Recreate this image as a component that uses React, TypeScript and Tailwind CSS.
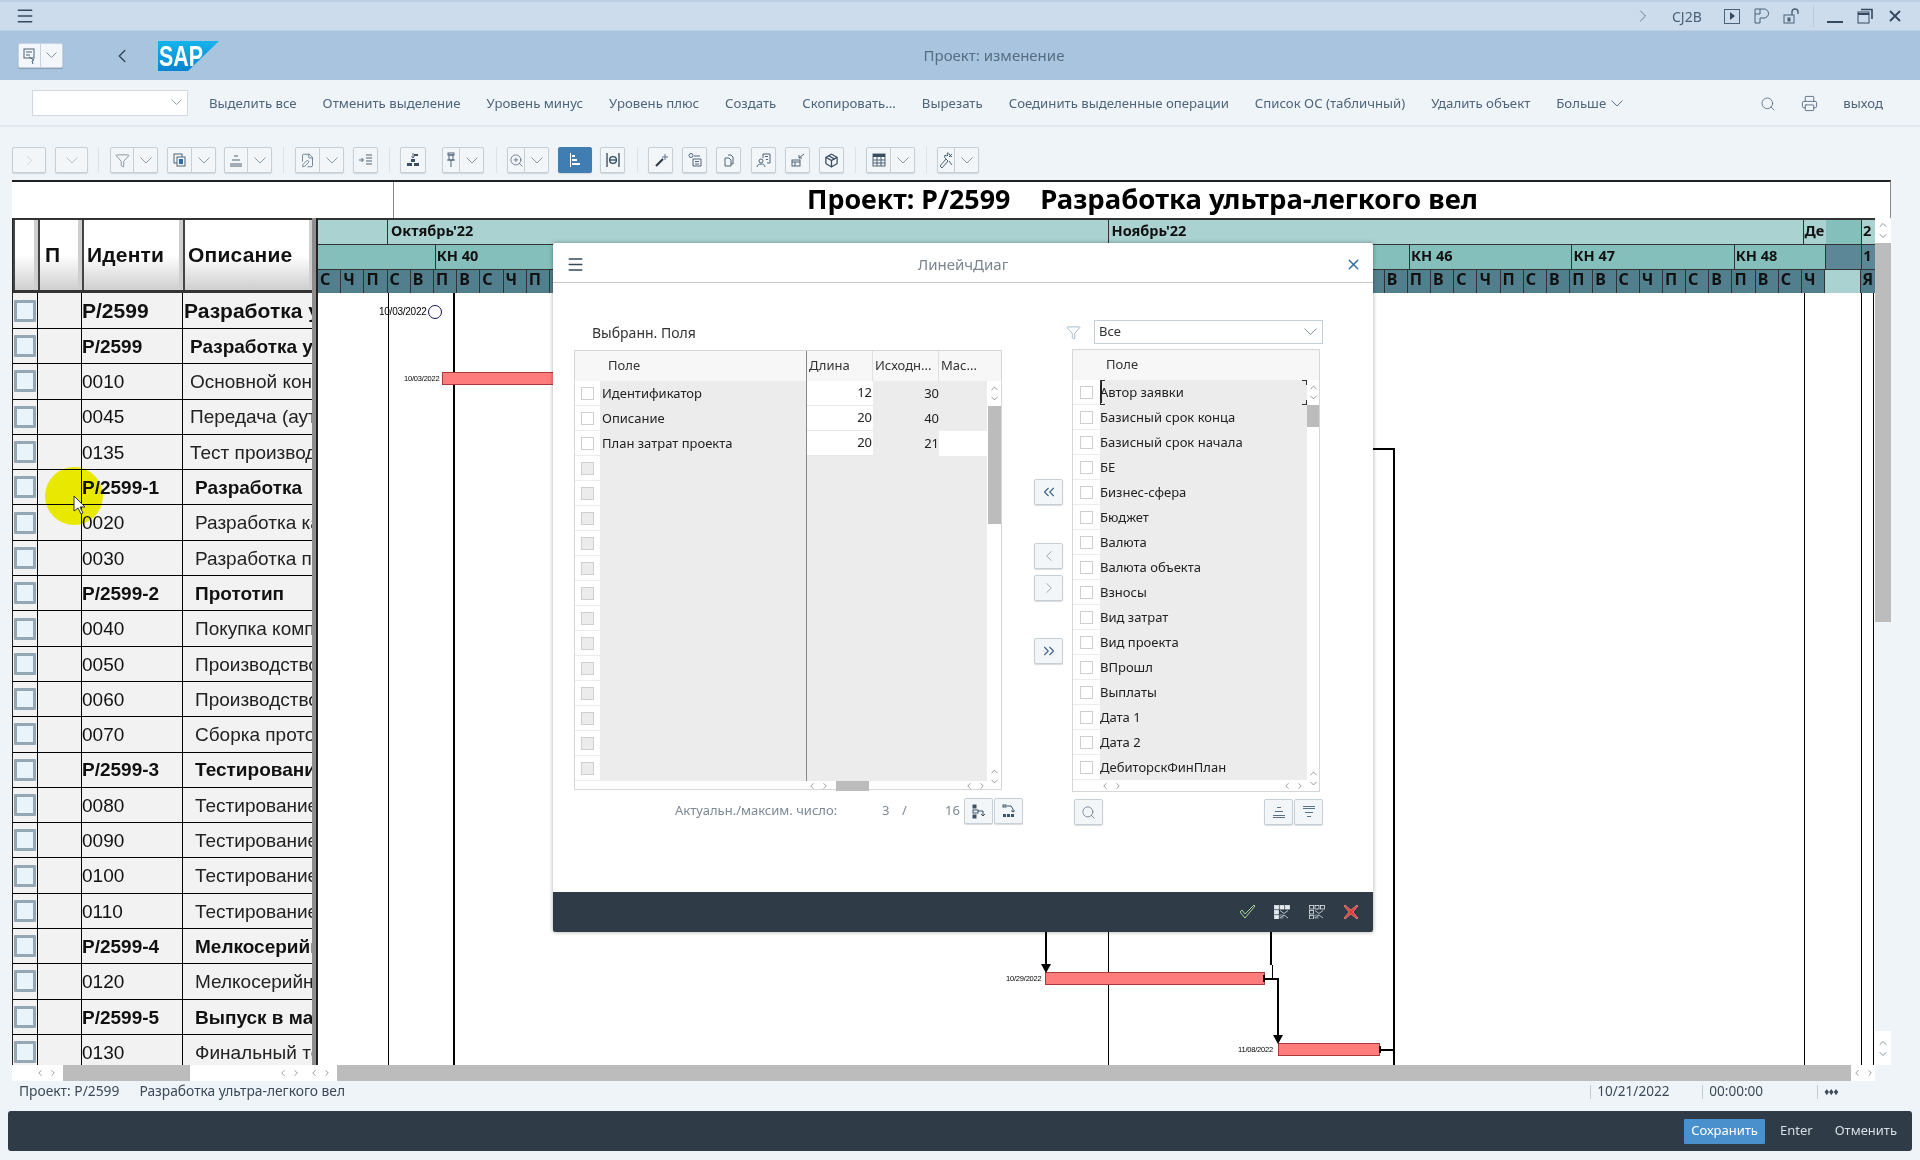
import React from "react";
import { ChevronLeft, ChevronRight, ChevronUp, ChevronDown, ChevronsLeft, ChevronsRight, Funnel, Menu, Search, Printer, X, ZoomIn, FilePen, Package } from "lucide-react";

const NS = "font-['Noto_Sans',sans-serif]";
const LS = "font-['Liberation_Sans',sans-serif]";

function Chev({ w = 12, c = "#7f8e9c" }: { w?: number; c?: string }) {
  return (
    <svg width={w} height={w * 0.55} viewBox="0 0 12 6.6" fill="none" stroke={c} strokeWidth="0.9"><path d="M0.5 0.5L6 6l5.5-5.5" /></svg>
  );
}

function Tb({ w, active, split, children }: { w: number; active?: boolean; split?: boolean; children: React.ReactNode }) {
  return (
    <div style={{ width: w }} className={`h-[26px] flex items-center shrink-0 rounded-[2px] border ${active ? "bg-[#3f7db3] border-[#3f7db3] text-white" : "bg-[#f3f6f9] border-[#c6ced6] text-[#4e6275]"} shadow-[0_1px_1px_rgba(0,0,0,0.12)]`}>
      <div className="flex-1 flex items-center justify-center">{children}</div>
      {split && (
        <div className="w-[24px] h-full flex items-center justify-center border-l border-[#c6ced6]">
          <Chev />
        </div>
      )}
    </div>
  );
}
const Sep = () => <div className="w-px h-[26px] bg-[#dbe2e8] shrink-0" />;
const Ic = ({ children, w = 16, h = 16 }: { children: React.ReactNode; w?: number; h?: number }) => (
  <svg width={w} height={h} viewBox={`0 0 ${w} ${h}`} fill="none" stroke="#4e6275" strokeWidth="1">{children}</svg>
);

function Toolbar() {
  const s = 15;
  const sw = 1.2;
  return (
    <div className="h-[26px] mt-[20px] ml-[12px] flex items-center">
      <Tb w={34}><ChevronRight size={17} strokeWidth={1.1} className="text-[#c0c8d0]" /></Tb>
      <div className="w-[9px]" />
      <Tb w={33}><Chev c="#b0bac4" /></Tb>
      <div className="w-[10px]" /><Sep /><div className="w-[11px]" />
      <Tb w={48} split><Funnel size={s} strokeWidth={1} /></Tb>
      <div className="w-[9px]" />
      <Tb w={49} split>
        <Ic><rect x="2" y="2" width="8" height="9" /><rect x="5" y="5" width="8" height="9" fill="#f3f6f9" /><rect x="7" y="7" width="4" height="5" fill="#2f6ea5" stroke="none" /></Ic>
      </Tb>
      <div className="w-[8px]" />
      <Tb w={48} split>
        <Ic><path d="M6 4h4M4 8h8M2 12h12M2 14h12" /></Ic>
      </Tb>
      <div className="w-[11px]" /><Sep /><div className="w-[11px]" />
      <Tb w={49} split><FilePen size={s} strokeWidth={sw} /></Tb>
      <div className="w-[9px]" />
      <Tb w={25}>
        <Ic><path d="M1 8h4M3.5 6l2 2-2 2M8 3h6M8 6h6M8 9h6M8 12h6" /></Ic>
      </Tb>
      <div className="w-[11px]" /><Sep /><div className="w-[10px]" />
      <Tb w={26}>
        <Ic><path d="M8 1v5M6.5 4.5L8 6l1.5-1.5" /><rect x="9" y="2" width="4" height="2" fill="#3a4d60" stroke="none" /><rect x="6" y="7" width="4" height="3" fill="#3a4d60" stroke="none" /><rect x="2" y="11" width="5" height="3" fill="#3a4d60" stroke="none" /><rect x="9" y="11" width="5" height="3" fill="#3a4d60" stroke="none" /></Ic>
      </Tb>
      <div className="w-[16px]" />
      <Tb w={42} split>
        <Ic><rect x="5" y="1" width="6" height="2" /><rect x="6" y="3" width="4" height="5" /><path d="M4 8h8M8 8v7" /></Ic>
      </Tb>
      <div className="w-[12px]" /><Sep /><div className="w-[10px]" />
      <Tb w={42} split><ZoomIn size={s} strokeWidth={sw} /></Tb>
      <div className="w-[9px]" />
      <Tb w={34} active>
        <svg width="16" height="16" viewBox="0 0 16 16"><rect x="3" y="1" width="1" height="14" fill="#fff" /><rect x="5" y="3" width="3" height="2" fill="#fff" /><rect x="5" y="7" width="5" height="2" fill="#fff" /><rect x="5" y="11" width="8" height="2" fill="#fff" /></svg>
      </Tb>
      <div className="w-[8px]" />
      <Tb w={25}>
        <svg width="16" height="16" viewBox="0 0 16 16" fill="none" stroke="#2f4a60" strokeWidth="1.3"><path d="M2 1v14M14 1v14" /><circle cx="8" cy="8" r="3.4" /><path d="M4 8h8" /></svg>
      </Tb>
      <div className="w-[12px]" /><Sep /><div className="w-[10px]" />
      <Tb w={25}>
        <Ic><path d="M3 14L10 7" strokeWidth="2.2" stroke="#2f3c48" /><path d="M12 2v6M9 5h6" strokeWidth="0.9" /></Ic>
      </Tb>
      <div className="w-[9px]" />
      <Tb w={25}>
        <Ic><circle cx="4" cy="3.5" r="2" /><path d="M7 4h6M6 7h8v7H6zM8 9.5h4M8 12h4" /></Ic>
      </Tb>
      <div className="w-[9px]" />
      <Tb w={25}>
        <Ic><path d="M7 3h3l2 2v7h-2M4 6h4l2 2v6H4z" /></Ic>
      </Tb>
      <div className="w-[10px]" />
      <Tb w={25}>
        <Ic><circle cx="5" cy="9" r="2" /><path d="M1 15c0-4 8-4 8 0M7 6V2h7v9h-3" /><path d="M9 4.5h3M10 7.5h2" /></Ic>
      </Tb>
      <div className="w-[9px]" />
      <Tb w={25}>
        <Ic><rect x="2" y="8" width="8" height="6" /><path d="M2 10h8M5 10v4M14 2L9 6M9 3v3h3" /></Ic>
      </Tb>
      <div className="w-[9px]" />
      <Tb w={25}><Package size={s} strokeWidth={2} className="text-[#3a4d60]" /></Tb>
      <div className="w-[11px]" /><Sep /><div className="w-[10px]" />
      <Tb w={49} split>
        <Ic><rect x="2" y="2" width="12" height="12" /><rect x="2" y="2" width="12" height="3" fill="#3a4d60" stroke="none" /><path d="M6 5v9M10 5v9M2 8h12M2 11h12" /></Ic>
      </Tb>
      <div className="w-[11px]" /><Sep /><div className="w-[10px]" />
      <Tb w={42} split>
        <Ic><path d="M2 14l6-7 2 2-6 7zM8 7a3 3 0 0 1-1-4l2 1 1-1-1-2a3 3 0 0 1 3 4M11 9l3 4M11 2l3 3M14 2l-3 3" /></Ic>
      </Tb>
    </div>
  );
}

const MENU = ["Выделить все", "Отменить выделение", "Уровень минус", "Уровень плюс", "Создать", "Скопировать...", "Вырезать", "Соединить выделенные операции", "Список ОС (табличный)", "Удалить объект"];

type Row = [string, string, number, number];
const ROWS: Row[] = [
  ["P/2599", "Разработка ультра-легкого", 1, 1],
  ["P/2599", "Разработка ультра-легкого", 7, 2],
  ["0010", "Основной конструктив", 7, 0],
  ["0045", "Передача (аутсорсинг)", 7, 0],
  ["0135", "Тест производства", 7, 0],
  ["P/2599-1", "Разработка", 12, 2],
  ["0020", "Разработка карбона", 12, 0],
  ["0030", "Разработка по", 12, 0],
  ["P/2599-2", "Прототип", 12, 2],
  ["0040", "Покупка компонентов", 12, 0],
  ["0050", "Производство рамы", 12, 0],
  ["0060", "Производство колес", 12, 0],
  ["0070", "Сборка прототипа", 12, 0],
  ["P/2599-3", "Тестирование", 12, 2],
  ["0080", "Тестирование рамы", 12, 0],
  ["0090", "Тестирование колес", 12, 0],
  ["0100", "Тестирование тормозов", 12, 0],
  ["0110", "Тестирование сборки", 12, 0],
  ["P/2599-4", "Мелкосерийное", 12, 2],
  ["0120", "Мелкосерийное", 12, 0],
  ["P/2599-5", "Выпуск в массы", 12, 2],
  ["0130", "Финальный тест", 12, 0],
];

function HeadCell({ w, children }: { w: number; children?: React.ReactNode }) {
  return (
    <div style={{ width: w }} className="h-full shrink-0 border-l-2 border-r-[4px] border-l-[#444] border-r-[#cfcfcf] bg-gradient-to-b from-white via-white to-[#cfcfcf] flex items-center pl-[3px] overflow-hidden">
      {children}
    </div>
  );
}

function LeftTable() {
  return (
    <div className={`w-[300px] shrink-0 flex flex-col ${LS} text-[#111]`}>
      <div className="h-[75px] flex border-t-2 border-b-[3px] border-[#333] font-bold text-[21px] tracking-[0.2px]">
        <HeadCell w={25} />
        <HeadCell w={44}><span className="pl-[2px]">П</span></HeadCell>
        <HeadCell w={101}>Иденти</HeadCell>
        <HeadCell w={130}>Описание</HeadCell>
      </div>
      {ROWS.map(([id, desc, ind, kind], i) => (
        <div key={i} className={`${i === 0 ? "h-[36px]" : "h-[35.3px]"} shrink-0 flex border-b border-black bg-[#f2f2f2] whitespace-nowrap overflow-hidden`}>
          <div className="w-[25px] shrink-0 flex items-center justify-center border-r border-black">
            <div className="w-[22px] h-[22px] border-[3px] border-[#93a7b5] bg-[#e8f3fa] rounded-[1px]" />
          </div>
          <div className="w-[44px] shrink-0 border-r border-black" />
          <div className={`w-[101px] shrink-0 border-r border-black flex items-center ${i === 0 ? "" : "pt-[2px]"} ${kind === 1 ? "text-[21px]" : "text-[19px]"} ${kind ? "font-bold" : ""}`}>
            {i === 5 ? <><span className="text-[#1010b0]">P/</span>2599-1</> : id}
          </div>
          <div style={{ paddingLeft: ind }} className={`w-[130px] shrink-0 flex items-center overflow-hidden ${i === 0 ? "" : "pt-[2px]"} ${kind === 1 ? "text-[21px]" : "text-[19px]"} ${kind ? "font-bold" : "text-[#222]"}`}>
            {desc}
          </div>
        </div>
      ))}
    </div>
  );
}

const DAYS = ["С", "Ч", "П", "С", "В", "П", "В", "С", "Ч", "П", "С", "В", "П", "В", "С", "Ч", "П", "С", "В", "П", "В", "С", "Ч", "П", "С", "В", "П", "В", "С", "Ч", "П", "С", "В", "П", "В", "С", "Ч", "П", "С", "В", "П", "В", "С", "Ч", "П", "С", "В", "П", "В", "С", "Ч", "П", "С", "В", "П", "В", "С", "Ч", "П", "С", "В", "П", "В", "С", "Ч"];
const WEEKS = ["КН 40", "КН 41", "КН 42", "КН 43", "КН 44", "КН 45", "КН 46", "КН 47", "КН 48"];

function GanttHead() {
  const dayW = 23.2;
  return (
    <div className={`${NS} font-bold text-[#111] text-[14.5px] h-[75px] flex flex-col border-t-2 border-[#333] overflow-hidden`}>
      <div className="h-[25px] flex bg-[#aad2d1] border-b border-[#333] shrink-0">
        <div className="w-[70px] shrink-0 border-r border-[#333]" />
        <div className="w-[720.5px] shrink-0 border-r border-[#333] pl-[3px] leading-[20px]">Октябрь'22</div>
        <div className="w-[695px] shrink-0 border-r border-[#333] pl-[3px] leading-[20px]">Ноябрь'22</div>
        <div className="w-[22.5px] shrink-0 pl-[1px] leading-[20px] overflow-hidden">Де</div>
        <div className="w-[36px] shrink-0 bg-[#84bfbc] border-r border-[#333]" />
        <div className="flex-1 pl-[1px] leading-[20px]">2</div>
      </div>
      <div className="h-[25px] flex bg-[#84bfbc] border-b border-[#333] shrink-0">
        <div className="w-[117.7px] shrink-0 border-r border-[#333]" />
        {WEEKS.map((w, i) => (
          <div key={w} style={{ width: i === 8 ? 91.5 : dayW * 7 }} className="shrink-0 border-r border-[#333] pl-[1px] leading-[21px]">{w}</div>
        ))}
        <div className="w-[36px] shrink-0 bg-[#5c8796] border-r border-[#333]" />
        <div className="flex-1 bg-[#5c8796] pl-[1px] leading-[21px]">1</div>
      </div>
      <div className="h-[25px] flex bg-[#527f8e] border-b-2 border-[#222] shrink-0 text-[16px]">
        {DAYS.slice(0, 65).map((d, i) => (
          <div key={i} style={{ width: dayW }} className="shrink-0 border-r border-[#333] pl-[2px] leading-[19px]">{d}</div>
        ))}
        <div className="w-[36px] shrink-0 bg-[#aad2d1] border-r border-[#333]" />
        <div className="flex-1 bg-[#527f8e] pl-[1px] leading-[19px]">Я</div>
      </div>
    </div>
  );
}

function Bar({ l, t, w }: { l: number; t: number; w: number }) {
  return <div style={{ left: l, top: t, width: w }} className="absolute h-[13px] bg-[#ff7c7c] border border-[#a83a3a]" />;
}
function VL({ x, y, h, w = 1 }: { x: number; y: number; h: number; w?: number }) {
  return <div style={{ left: x, top: y, height: h, width: w }} className="absolute bg-black" />;
}
function HL({ x, y, w, h = 2 }: { x: number; y: number; w: number; h?: number }) {
  return <div style={{ left: x, top: y, height: h, width: w }} className="absolute bg-black" />;
}
function Arrow({ x, y }: { x: number; y: number }) {
  return (
    <svg style={{ left: x - 5, top: y - 9 }} className="absolute" width="10" height="9" viewBox="0 0 10 9"><path d="M0 0h10L5 9z" fill="#000" /></svg>
  );
}
function Small({ l, t, children }: { l: number; t: number; children: string }) {
  return <div style={{ left: l, top: t }} className={`absolute text-[7.5px] leading-[10px] tracking-[-0.2px] text-black ${LS}`}>{children}</div>;
}

function Chart() {
  const X = (n: number) => n - 318;
  const Y = (n: number) => n - 293;
  return (
    <div className="relative flex-1 bg-white overflow-hidden">
      <VL x={X(388)} y={0} h={800} />
      <VL x={X(453)} y={0} h={800} w={2} />
      <VL x={X(1108)} y={0} h={800} />
      <VL x={X(1804)} y={0} h={800} />
      <VL x={X(1861)} y={0} h={800} />
      <VL x={X(1873)} y={0} h={800} />
      <VL x={X(1393)} y={Y(448)} h={700} w={2} />
      <HL x={X(1372)} y={Y(448)} w={22} />
      <div style={{ left: X(379), top: Y(306) }} className={`absolute text-[10px] leading-[12px] tracking-[-0.25px] text-black ${LS}`}>10/03/2022</div>
      <div style={{ left: X(428), top: Y(305) }} className="absolute w-[14px] h-[14px] rounded-full border border-[#101060] bg-white" />
      <Bar l={X(442)} t={Y(372)} w={115} />
      <Small l={X(404)} t={Y(374)}>10/03/2022</Small>

      <VL x={X(1045)} y={Y(932)} h={34} w={2} />
      <Bar l={X(1045)} t={Y(972)} w={220} />
      <Arrow x={X(1046)} y={Y(973)} />
      <Small l={X(1006)} t={Y(974)}>10/29/2022</Small>
      <VL x={X(1270)} y={Y(932)} h={33} w={2} />
      <VL x={X(1272)} y={Y(965)} h={14} w={1} />
      <HL x={X(1265)} y={Y(978)} w={14} />
      <VL x={X(1277)} y={Y(978)} h={60} w={2} />
      <Bar l={X(1278)} t={Y(1043)} w={102} />
      <Arrow x={X(1278)} y={Y(1044)} />
      <Small l={X(1238)} t={Y(1045)}>11/08/2022</Small>
      <HL x={X(1380)} y={Y(1049)} w={14} />
      <div style={{ left: X(1263), top: Y(975) }} className="absolute w-[2px] h-[7px] bg-black" />
      <div style={{ left: X(1379), top: Y(1046) }} className="absolute w-[2px] h-[7px] bg-black" />
    </div>
  );
}

function UpDown({ s = 12 }: { s?: number }) {
  return (
    <>
      <ChevronUp size={s} strokeWidth={1.5} className="-mb-[1px]" />
      <ChevronDown size={s} strokeWidth={1.5} />
    </>
  );
}

function VScroll() {
  return (
    <div className="w-[16px] shrink-0 flex flex-col text-[#5f6d79]">
      <div className="h-[25px] bg-white flex flex-col items-center justify-center"><UpDown /></div>
      <div className="h-[379px] bg-[#bcbcbc]" />
      <div className="flex-1" />
      <div className="h-[34px] flex flex-col items-center justify-center bg-white"><UpDown /></div>
    </div>
  );
}

const Arrows = () => (
  <div className="flex items-center gap-[3px] text-[#5f6d79]">
    <ChevronLeft size={10} strokeWidth={1.6} />
    <ChevronRight size={10} strokeWidth={1.6} />
  </div>
);

function ModalBtn({ w = 29, children }: { w?: number; children: React.ReactNode }) {
  return <div style={{ width: w }} className="h-[26px] shrink-0 rounded-[2px] border border-[#c6ced6] bg-[#f3f6f9] flex items-center justify-center shadow-[0_1px_1px_rgba(0,0,0,0.15)] text-[#5a7085]">{children}</div>;
}

const RIGHT_ITEMS = ["Автор заявки", "Базисный срок конца", "Базисный срок начала", "БЕ", "Бизнес-сфера", "Бюджет", "Валюта", "Валюта объекта", "Взносы", "Вид затрат", "Вид проекта", "ВПрошл", "Выплаты", "Дата 1", "Дата 2", "ДебиторскФинПлан"];
const LEFT_ITEMS: [string, string, string][] = [["Идентификатор", "12", "30"], ["Описание", "20", "40"], ["План затрат проекта", "20", "21"]];

function LeftPicker() {
  return (
    <div className="w-[428px] h-[440px] border border-[#d6d6d6] flex flex-col bg-white">
      <div className="h-[30px] shrink-0 flex bg-[#f7f7f7] text-[13px] text-[#333]">
        <div className="w-[232px] shrink-0 pl-[33px] leading-[29px] border-r border-[#888]">Поле</div>
        <div className="w-[66px] shrink-0 pl-[2px] leading-[29px] border-r border-[#e0e0e0]">Длина</div>
        <div className="w-[66px] shrink-0 pl-[2px] leading-[29px] border-r border-[#e0e0e0]">Исходн...</div>
        <div className="w-[46px] shrink-0 pl-[2px] leading-[29px]">Мас...</div>
      </div>
      <div className="flex flex-1 min-h-0">
        <div className="flex-1 flex flex-col min-w-0">
          {Array.from({ length: 16 }).map((_, i) => {
            const it = LEFT_ITEMS[i];
            return (
              <div key={i} className="h-[25px] shrink-0 flex text-[13px] text-[#222]">
                <div className="w-[25px] shrink-0 flex items-center justify-center border-b border-[#ececec] bg-white"><div className={`w-[13px] h-[13px] border border-[#cfcfcf] ${it ? "bg-white" : "bg-[#ececec]"}`} /></div>
                <div className="w-[207px] shrink-0 bg-[#ececec] pl-[2px] leading-[25px] border-r border-[#888]">{it ? it[0] : ""}</div>
                <div className={`w-[66px] shrink-0 text-right pr-[1px] leading-[23px] border-b ${it ? "bg-white border-[#e8e8e8]" : "bg-[#ececec] border-[#ececec]"}`}>{it ? it[1] : ""}</div>
                <div className="w-[66px] shrink-0 text-right leading-[25px] bg-[#ececec]">{it ? it[2] : ""}</div>
                <div className={`w-[49px] shrink-0 ${i === 2 ? "bg-white" : "bg-[#ececec]"}`} />
              </div>
            );
          })}
          <div className="flex-1 flex items-stretch">
            <div className="w-[232px]" />
            <div className="flex items-center"><Arrows /></div>
            <div className="w-[33px] bg-[#bcbcbc] ml-[6px]" />
            <div className="flex-1" />
            <div className="flex items-center"><Arrows /></div>
          </div>
        </div>
        <div className="w-[14px] shrink-0 flex flex-col text-[#5f6d79] bg-white">
          <div className="h-[25px] flex flex-col items-center justify-center"><UpDown s={11} /></div>
          <div className="h-[118px] bg-[#bcbcbc] ml-[1px]" />
          <div className="flex-1" />
          <div className="h-[26px] flex flex-col items-center justify-center"><UpDown s={11} /></div>
        </div>
      </div>
    </div>
  );
}

function RightPicker() {
  return (
    <div className="w-[248px] h-[443px] border border-[#d6d6d6] flex flex-col bg-white">
      <div className="h-[30px] shrink-0 bg-[#f7f7f7] text-[13px] text-[#333] pl-[33px] leading-[29px]">Поле</div>
      <div className="flex flex-1 min-h-0">
        <div className="flex-1 flex flex-col min-w-0">
          {RIGHT_ITEMS.map((t, i) => (
            <div key={t} className="h-[25px] shrink-0 flex text-[13px] text-[#222]">
              <div className="w-[27px] shrink-0 flex items-center justify-center border-b border-[#ececec] bg-white"><div className="w-[13px] h-[13px] border border-[#cfcfcf]" /></div>
              <div className="relative flex-1 bg-[#ececec] leading-[25px] whitespace-nowrap">
                {t}
                {i === 0 && (
                  <>
                    <div className="absolute left-0 top-[1px] h-[22px] w-[1.5px] bg-[#222]" />
                    <div className="absolute left-0 top-0 w-[5px] h-[5px] border-l border-t border-[#333]" />
                    <div className="absolute left-0 bottom-0 w-[5px] h-[5px] border-l border-b border-[#333]" />
                    <div className="absolute right-0 top-0 w-[5px] h-[5px] border-r border-t border-[#333]" />
                    <div className="absolute right-0 bottom-0 w-[5px] h-[5px] border-r border-b border-[#333]" />
                  </>
                )}
              </div>
            </div>
          ))}
          <div className="flex-1 flex items-center justify-between pl-[27px] pr-[2px]"><Arrows /><Arrows /></div>
        </div>
        <div className="w-[12px] shrink-0 flex flex-col text-[#5f6d79]">
          <div className="h-[25px] flex flex-col items-center justify-center"><UpDown s={11} /></div>
          <div className="h-[22px] bg-[#bcbcbc]" />
          <div className="flex-1" />
          <div className="h-[26px] flex flex-col items-center justify-center"><UpDown s={11} /></div>
        </div>
      </div>
    </div>
  );
}

function GridIcon({ filled }: { filled: boolean }) {
  const cells = [[0, 0], [1, 0], [2, 0], [0, 1], [0, 2]];
  return (
    <svg width="16" height="14" viewBox="0 0 16 14">
      {cells.map(([c, r]) => (
        <rect key={`${c}${r}`} x={c * 5.5 + 0.5} y={r * 5 + 0.5} width="4" height="3.5" fill={filled ? "#e6ebef" : "none"} stroke="#dfe5ea" strokeWidth="0.8" />
      ))}
      <path d="M6 5.5l4 3 4-3M6 13l4-3 4 3" fill="none" stroke="#c3ccd4" strokeWidth="0.9" />
      <rect x="6" y="10" width="3" height="3" fill="none" stroke="#9fadb8" strokeWidth="0.7" />
    </svg>
  );
}

function Modal() {
  return (
    <div className={`absolute left-[553px] top-[243px] w-[820px] h-[689px] bg-white flex flex-col shadow-[0_0_4px_rgba(0,0,0,0.35)] rounded-[2px] ${NS}`}>
      <div className="h-[40px] shrink-0 flex items-center border-b border-[#c8c8c8] relative pt-[3px]">
        <Menu size={19} strokeWidth={1.7} className="ml-[13px] text-[#34495e]" />
        <div className="absolute inset-x-0 text-center text-[15px] text-[#7a8590]">ЛинейчДиаг</div>
        <X size={17} strokeWidth={2} className="ml-auto mr-[11px] text-[#2f6ea5]" />
      </div>
      <div className="flex-1 flex pl-[21px]">
        <div className="w-[449px] shrink-0 flex flex-col">
          <div className="h-[22px] mt-[39px] mb-[6px] pl-[18px] text-[14px] leading-[22px] text-[#333]">Выбранн. Поля</div>
          <LeftPicker />
          <div className="mt-[8px] flex items-center h-[26px] text-[13px] text-[#7d8994]">
            <div className="w-[101px]" />
            <div className="w-[207px] whitespace-nowrap">Актуальн./максим. число:</div>
            <div className="w-[20px]">3</div>
            <div className="w-[43px]">/</div>
            <div className="w-[19px]">16</div>
            <ModalBtn>
              <svg width="15" height="15" viewBox="0 0 15 15" fill="none" stroke="#3d5266"><rect x="2" y="1" width="3" height="3" fill="#3d5266" /><rect x="2" y="6" width="5" height="3" /><rect x="2" y="11" width="3" height="3" fill="#3d5266" /><path d="M7 7h5v5m-2-2l2 2 2-2" /></svg>
            </ModalBtn>
            <div className="w-px" />
            <ModalBtn>
              <svg width="15" height="15" viewBox="0 0 15 15" fill="none" stroke="#3d5266"><rect x="2" y="1" width="3" height="2" /><path d="M6 2h4l2 3v3m-2-1.5L12 8l2-1.5" /><rect x="2" y="10" width="3" height="3" fill="#3d5266" stroke="none" /><rect x="6" y="10" width="3" height="3" fill="#3d5266" stroke="none" /><rect x="10" y="10" width="3" height="3" fill="#3d5266" stroke="none" /></svg>
            </ModalBtn>
          </div>
        </div>
        <div className="ml-[11px] w-[29px] shrink-0 flex flex-col pt-[196px]">
          <ModalBtn><ChevronsLeft size={18} strokeWidth={1.5} className="text-[#3d6688]" /></ModalBtn>
          <div className="h-[38px]" />
          <ModalBtn><ChevronLeft size={18} strokeWidth={1} className="text-[#7f8e9c]" /></ModalBtn>
          <div className="h-[6px]" />
          <ModalBtn><ChevronRight size={18} strokeWidth={1} className="text-[#7f8e9c]" /></ModalBtn>
          <div className="h-[37px]" />
          <ModalBtn><ChevronsRight size={18} strokeWidth={1.5} className="text-[#3d6688]" /></ModalBtn>
        </div>
        <div className="ml-[9px] w-[251px] shrink-0 flex flex-col">
          <div className="h-[24px] mt-[37px] mb-[5px] flex items-center">
            <Funnel size={15} strokeWidth={1.1} className="text-[#7b9aad] ml-[-6px] mr-[13px]" />
            <div className="w-[229px] h-[24px] border border-[#c6ced6] flex items-center pl-[4px] text-[13px] text-[#333]">
              Все
              <div className="ml-auto mr-[5px] flex"><Chev w={13} /></div>
            </div>
          </div>
          <RightPicker />
          <div className="mt-[7px] flex items-center">
            <div className="ml-[2px]"><ModalBtn><Search size={15} strokeWidth={1.2} /></ModalBtn></div>
            <div className="ml-auto flex gap-px">
              <ModalBtn><svg width="16" height="16" viewBox="0 0 16 16" stroke="currentColor" fill="none"><path d="M6 3.5h4M4 7.5h8M2 11.5h12M2 13.5h12" /></svg></ModalBtn>
              <ModalBtn><svg width="16" height="16" viewBox="0 0 16 16" stroke="currentColor" fill="none"><path d="M2 2.5h12M2 4.5h12M4 8.5h8M6 12.5h4" /></svg></ModalBtn>
            </div>
          </div>
        </div>
      </div>
      <div className="h-[40px] shrink-0 bg-[#2f3c48] rounded-b-[2px] flex items-center justify-end pr-[14px] pb-[1px]">
        <svg className="mr-[18px]" width="17" height="15" viewBox="0 0 17 15" fill="none" stroke="#a7cf98" strokeWidth="1"><path d="M1 8l2-2 3 4 9-9 1 1-10 12z" /></svg>
        <div className="mr-[19px] flex"><GridIcon filled /></div>
        <div className="mr-[18px] flex"><GridIcon filled={false} /></div>
        <svg width="16" height="16" viewBox="0 0 16 16" fill="#e0413a" stroke="#f2a6a2" strokeWidth="0.6"><path d="M2 1l6 5 6-5 1 1-5 6 5 6-1 1-6-5-6 5-1-1 5-6-5-6z" /></svg>
      </div>
    </div>
  );
}

export default function App() {
  return (
    <div className={`relative w-[1920px] h-[1160px] overflow-hidden bg-[#eff4f9] ${NS} flex flex-col`}>
      {/* shell bar */}
      <div className="h-[31px] shrink-0 bg-[#cddced] border-t-2 border-b border-[#bccfe2] flex items-center text-[#4b6177] text-[14px]">
        <Menu size={20} strokeWidth={1.8} className="ml-[15px] text-[#34495e]" />
        <ChevronRight size={20} strokeWidth={1.1} className="ml-auto text-[#5d7388]" />
        <span className="ml-[19px] w-[33px] whitespace-nowrap">CJ2B</span>
        <div className="ml-[19px] w-[16px] h-[15px] border border-[#4b6177] flex items-center justify-center"><div className="w-0 h-0 border-y-[4px] border-y-transparent border-l-[5px] border-l-[#34495e]" /></div>
        <svg className="ml-[14px]" width="16" height="16" viewBox="0 0 16 16" fill="none" stroke="#4b6177"><path d="M1 1h9a4.5 4.5 0 0 1 0 9H6v5H1zM1 6h5V1" /></svg>
        <svg className="ml-[13px]" width="17" height="16" viewBox="0 0 17 16" fill="none" stroke="#4b6177"><rect x="1" y="7" width="10" height="8" /><rect x="5" y="10" width="2" height="3" fill="#4b6177" /><path d="M9 7V4a3 3 0 0 1 6 0v2" strokeWidth="1.4" /></svg>
        <div className="ml-[13px] w-px h-[22px] bg-[#b8c9da]" />
        <div className="ml-[13px] w-[16px] h-[2px] bg-[#34495e] mt-[12px]" />
        <svg className="ml-[14px]" width="16" height="16" viewBox="0 0 16 16" fill="none" stroke="#34495e"><rect x="1" y="4" width="11" height="11" /><path d="M1 6h11" strokeWidth="2" /><path d="M4 1.5h11V11" strokeWidth="1.6" /></svg>
        <svg className="ml-[16px] mr-[19px]" width="12" height="12" viewBox="0 0 12 12" stroke="#34495e" strokeWidth="1.9"><path d="M1 1l10 10M11 1L1 11" /></svg>
      </div>
      {/* header */}
      <div className="h-[49px] shrink-0 bg-[#a9c4de] flex items-center relative">
        <div className="ml-[18px] w-[45px] h-[25px] rounded-[2px] bg-[#f3f6fa] border border-[#c6d2de] flex items-center shadow-[0_1px_1px_rgba(0,0,0,0.2)]">
          <div className="w-[21px] flex justify-center">
            <svg width="14" height="16" viewBox="0 0 14 16" fill="none" stroke="#4b6177"><rect x="1" y="1" width="10" height="9" /><path d="M3 4h6M3 7h4" /><path d="M6 9l5 3-2 1 1 3" /></svg>
          </div>
          <div className="flex-1 h-full border-l border-[#c6d2de] flex items-center justify-center"><Chev w={11} c="#6b7f92" /></div>
        </div>
        <ChevronLeft size={22} strokeWidth={1.4} className="ml-[48px] text-[#2f4256]" />
        <svg className="ml-[25px]" width="61" height="30" viewBox="0 0 61 30">
          <defs>
            <linearGradient id="sap" x1="0" y1="0" x2="0" y2="1"><stop offset="0" stopColor="#14b4ec" /><stop offset="1" stopColor="#0a84d0" /></linearGradient>
          </defs>
          <path d="M0 0h61L30 30H0z" fill="url(#sap)" />
          <text x="1" y="25" fontFamily="Liberation Sans, sans-serif" fontWeight="700" fontSize="29" fill="#fff" textLength="44" lengthAdjust="spacingAndGlyphs">SAP</text>
        </svg>
        <div className="absolute left-0 right-0 text-center text-[15px] text-[#566e85] pl-[68px]">Проект: изменение</div>
      </div>
      {/* menu */}
      <div className="h-[47px] shrink-0 border-b-2 border-[#e1e8ef] flex items-center text-[13.2px] text-[#4e6478] pt-[2px]">
        <div className="ml-[32px] w-[156px] h-[26px] -mt-[2px] bg-white border border-[#d1d8df] flex items-center justify-end pr-[5px]"><Chev w={11} /></div>
        <div className="ml-[21px] flex items-center gap-[26px] whitespace-nowrap">
          {MENU.map((m) => <span key={m}>{m}</span>)}
          <span className="flex items-center gap-[5px]">Больше <Chev w={12} c="#4e6478" /></span>
        </div>
        <Search size={16} strokeWidth={1.2} className="ml-auto" />
        <Printer size={17} strokeWidth={1.2} className="ml-[25px]" />
        <span className="ml-[25px] mr-[37px]">выход</span>
      </div>
      <Toolbar />
      {/* Gantt frame */}
      <div className="mt-[7px] ml-[12px] w-[1879px] h-[885px] flex flex-col shrink-0">
        <div className="h-[38px] shrink-0 bg-white border-t-2 border-[#222] border-r border-r-[#888] flex items-center relative">
          <div className="w-[382px] h-full border-r border-[#888] shrink-0" />
          <div className="ml-[413px] flex items-center text-black font-bold whitespace-nowrap leading-none -mt-[2px]">
            <span className="text-[26.8px]">Проект: P/2599</span>
            <span className="ml-[30px] text-[27.5px]">Разработка ультра-легкого вел</span>
          </div>
        </div>
        <div className="flex-1 flex min-h-0">
          <div className="w-[300px] shrink-0 overflow-hidden border-l border-[#222]"><LeftTable /></div>
          <div className="w-[6px] shrink-0 bg-[#8e8e8e] border-r-[2px] border-[#222]" />
          <div className="flex-1 flex flex-col min-w-0">
            <GanttHead />
            <Chart />
          </div>
          <VScroll />
        </div>
      </div>
      {/* horizontal scrolls */}
      <div className="h-[16px] ml-[12px] w-[1863px] shrink-0 flex items-stretch">
        <div className="w-[51px] bg-white flex items-center justify-center pl-[18px]"><Arrows /></div>
        <div className="w-[127px] bg-[#bcbcbc]" />
        <div className="w-[147px] bg-white flex items-center justify-end pr-[5px] gap-[8px]"><Arrows /><Arrows /></div>
        <div className="flex-1 bg-[#bcbcbc]" />
        <div className="w-[24px] bg-white flex items-center justify-center"><Arrows /></div>
      </div>
      {/* status */}
      <div className="h-[30px] shrink-0 flex items-center text-[13.8px] text-[#3c4a57] pb-[9px]">
        <span className="ml-[19px]">Проект: P/2599</span>
        <span className="ml-[20px]">Разработка ультра-легкого вел</span>
        <div className="ml-auto w-px h-[14px] bg-[#c3ccd4]" />
        <span className="ml-[6px] w-[105px] text-[13.6px]">10/21/2022</span>
        <div className="w-px h-[14px] bg-[#c3ccd4]" />
        <span className="ml-[6px] w-[108px] text-[13.6px]">00:00:00</span>
        <div className="w-px h-[14px] bg-[#c3ccd4]" />
        <span className="ml-[6px] mr-[82px] text-[10px] font-bold tracking-[-0.5px]">♦♦♦</span>
      </div>
      {/* footer */}
      <div className="h-[40px] mx-[8px] shrink-0 rounded-[3px] bg-[#2f3c48] flex items-center justify-end text-[13px] text-[#d7dee5]">
        <div className="w-[81px] h-[25px] bg-[#4a90cc] rounded-[1px] flex items-center justify-center text-white">Сохранить</div>
        <span className="ml-[15px]">Enter</span>
        <span className="ml-[22px] mr-[15px]">Отменить</span>
      </div>
      <Modal />
      {/* cursor highlight */}
      <div className="absolute left-[45px] top-[467px] w-[58px] h-[58px] rounded-full bg-[#f5f500] mix-blend-multiply" />
      <svg className="absolute left-[73px] top-[495px]" width="14" height="20" viewBox="0 0 14 20"><path d="M1 1v15l4-3 3 6 2-1-3-6h5z" fill="#fff" stroke="#333" /></svg>
    </div>
  );
}
